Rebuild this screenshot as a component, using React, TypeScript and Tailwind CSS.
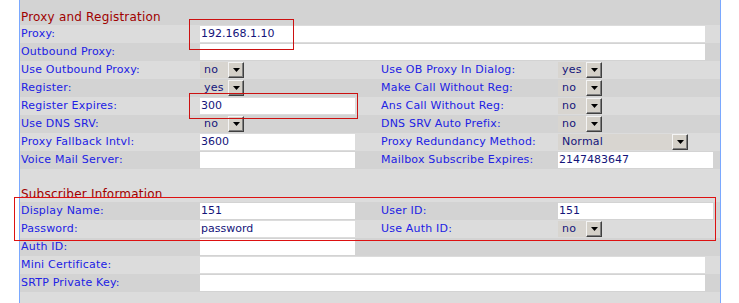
import React from 'react';

type Cell =
  | { kind: 'text'; value?: string; wide?: boolean }
  | { kind: 'select'; value: string; wide?: boolean };

type Row = {
  label: string;
  left: Cell;
  rightLabel?: string;
  right?: Cell;
  full?: boolean;
};

const LIGHT = 'bg-[#dcdcdc]';
const DARK = 'bg-[#d3d3d3]';

const proxyRows: Row[] = [
  { label: 'Proxy:', left: { kind: 'text', value: '192.168.1.10' }, full: true },
  { label: 'Outbound Proxy:', left: { kind: 'text' }, full: true },
  {
    label: 'Use Outbound Proxy:',
    left: { kind: 'select', value: 'no' },
    rightLabel: 'Use OB Proxy In Dialog:',
    right: { kind: 'select', value: 'yes' },
  },
  {
    label: 'Register:',
    left: { kind: 'select', value: 'yes' },
    rightLabel: 'Make Call Without Reg:',
    right: { kind: 'select', value: 'no' },
  },
  {
    label: 'Register Expires:',
    left: { kind: 'text', value: '300' },
    rightLabel: 'Ans Call Without Reg:',
    right: { kind: 'select', value: 'no' },
  },
  {
    label: 'Use DNS SRV:',
    left: { kind: 'select', value: 'no' },
    rightLabel: 'DNS SRV Auto Prefix:',
    right: { kind: 'select', value: 'no' },
  },
  {
    label: 'Proxy Fallback Intvl:',
    left: { kind: 'text', value: '3600' },
    rightLabel: 'Proxy Redundancy Method:',
    right: { kind: 'select', value: 'Normal', wide: true },
  },
  {
    label: 'Voice Mail Server:',
    left: { kind: 'text' },
    rightLabel: 'Mailbox Subscribe Expires:',
    right: { kind: 'text', value: '2147483647' },
  },
];

const subscriberRows: Row[] = [
  {
    label: 'Display Name:',
    left: { kind: 'text', value: '151' },
    rightLabel: 'User ID:',
    right: { kind: 'text', value: '151' },
  },
  {
    label: 'Password:',
    left: { kind: 'text', value: 'password' },
    rightLabel: 'Use Auth ID:',
    right: { kind: 'select', value: 'no' },
  },
  { label: 'Auth ID:', left: { kind: 'text' } },
  { label: 'Mini Certificate:', left: { kind: 'text' }, full: true },
  { label: 'SRTP Private Key:', left: { kind: 'text' }, full: true },
];

function TextBox({ value = '', wide }: { value?: string; wide?: boolean }) {
  return (
    <input
      readOnly
      value={value}
      className={`block h-4 border-0 bg-white px-px text-[11px] leading-4 text-[#14147a] outline-none ${
        wide ? 'w-[505px]' : 'w-[155px]'
      }`}
    />
  );
}

function Dropdown({ value, wide }: { value: string; wide?: boolean }) {
  return (
    <div className={`flex h-4 items-center bg-[#d8d5d0] ${wide ? 'w-[130px]' : 'w-[44px]'}`}>
      <span className="flex-1 pl-1 text-[11px] leading-4 tracking-[0.2px] text-[#14147a]">{value}</span>
      <span className="flex h-4 w-4 items-center justify-center border border-t-[#f4f4f4] border-l-[#f4f4f4] border-r-[#404040] border-b-[#404040] bg-[#d4d0c8] shadow-[inset_-1px_-1px_0_#808080]">
        <svg width="7" height="4" viewBox="0 0 7 4">
          <path d="M0 0h7L3.5 4z" fill="#000" />
        </svg>
      </span>
    </div>
  );
}

function Field({ cell, wide }: { cell: Cell; wide?: boolean }) {
  if (cell.kind === 'select') return <Dropdown value={cell.value} wide={cell.wide} />;
  return <TextBox value={cell.value} wide={wide} />;
}

const labelCls = 'pl-px text-[11px] leading-[18px] tracking-[0.2px] text-[#2121e4] whitespace-nowrap';

function ConfigRow({ row, dark }: { row: Row; dark: boolean }) {
  return (
    <div className={`grid h-[18px] grid-cols-[180px_180px_178px_162px] items-center ${dark ? DARK : LIGHT}`}>
      <div className={labelCls}>{row.label}</div>
      {row.full ? (
        <div className="col-span-3">
          <Field cell={row.left} wide />
        </div>
      ) : (
        <>
          <div>
            <Field cell={row.left} />
          </div>
          <div className={labelCls}>{row.rightLabel}</div>
          <div>{row.right && <Field cell={row.right} />}</div>
        </>
      )}
    </div>
  );
}

function Section({ rows, firstDark }: { rows: Row[]; firstDark: boolean }) {
  return (
    <>
      {rows.map((r, i) => (
        <ConfigRow key={r.label} row={r} dark={i % 2 === 0 ? firstDark : !firstDark} />
      ))}
    </>
  );
}

export default function App() {
  return (
    <div
      className="relative h-[303px] w-[739px] overflow-hidden bg-white"
      style={{ fontFamily: '"DejaVu Sans", Verdana, sans-serif' }}
    >
      <div className="ml-[19px] h-full w-[702px] border-x border-[#7aa8ff] bg-[#dcdcdc]">
        <div className={`h-[25px] pl-px pt-[10px] text-[12px] leading-[14px] tracking-[0.2px] text-[#a00000] ${DARK}`}>
          Proxy and Registration
        </div>
        <Section rows={proxyRows} firstDark={false} />
        <div className={`h-[33px] pl-px pt-[18px] text-[12px] leading-[14px] tracking-[0.2px] text-[#a00000] ${LIGHT}`}>
          Subscriber Information
        </div>
        <Section rows={subscriberRows} firstDark={true} />
      </div>

      {/* annotation boxes drawn over the screenshot */}
      <div className="pointer-events-none absolute left-[189px] top-[19px] h-[31px] w-[105px] border border-[#cc1111]" />
      <div className="pointer-events-none absolute left-[189px] top-[93px] h-[26px] w-[169px] border border-[#cc1111]" />
      <div className="pointer-events-none absolute left-[14px] top-[197px] h-[44px] w-[702px] border border-[#dd1111]" />
    </div>
  );
}
